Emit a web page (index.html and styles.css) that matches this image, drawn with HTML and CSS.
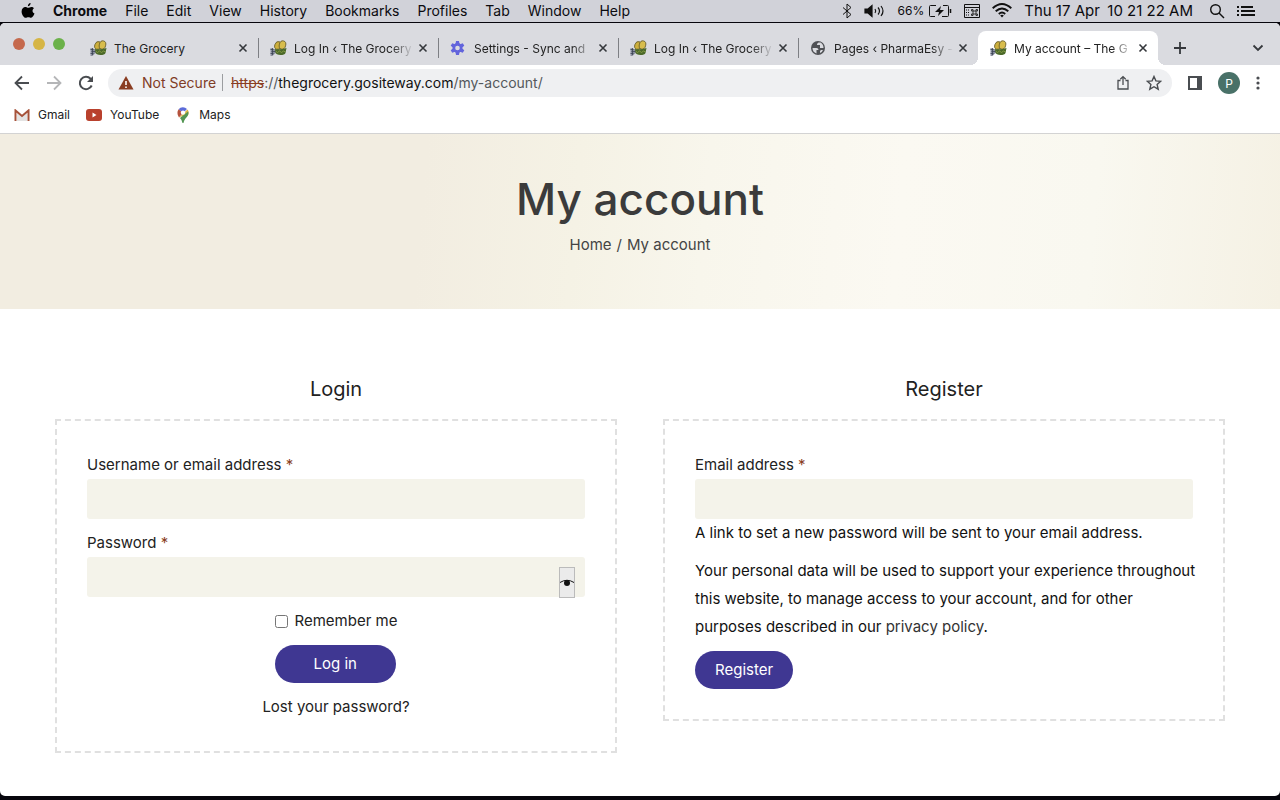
FILE: index.html
```
<!doctype html>
<html lang="en">
  <head>
    <meta charset="UTF-8" />
    <meta name="viewport" content="width=device-width, initial-scale=1" />
    <title>My account – The Grocery</title>
    <link rel="stylesheet" href="styles.css">
  </head>
  <body>
    <!-- shared icons -->
    <svg class="sprite" aria-hidden="true">
      <symbol id="grocery" viewBox="0 0 16 16">
        <ellipse cx="7.500" cy="5.500" rx="3.200" ry="4" fill="#cdb03e" stroke="#665b28" stroke-width=".8" transform="rotate(20 7.500 5.500)" />
        <ellipse cx="12" cy="5" rx="3.200" ry="4.200" fill="#d8bd4c" stroke="#665b28" stroke-width=".8" transform="rotate(15 12 5)" />
        <path d="M4 9q6 1 12-1l-1 5q-1 2-5 2-4 0-6-3z" fill="#4c6a2a" />
        <path d="M5 11l2 1.500 2-1.500 2 1.500 2-1.500 2 1" stroke="#8fa54a" stroke-width=".8" fill="none" />
        <path d="M0 8l4 1 1 4-3 3H0z" fill="#8a90a0" />
        <path d="M0 9.500h3M1 11.500h4M0 13.500h3M2 8v7" stroke="#3c4454" stroke-width=".8" />
      </symbol>
      <symbol id="close" viewBox="0 0 10 10">
        <path d="M1.500 1.500l7 7M8.500 1.500l-7 7" stroke="#35383c" stroke-width="1.600" />
      </symbol>
    </svg>

    <header class="menubar">
      <nav class="menus">
        <svg class="apple" width="14" height="16" viewBox="0 0 14 16"><path d="M9.600 0c.1 1.700-1.200 3.200-2.700 3.300C6.700 1.700 8.100.2 9.600 0zM13 5.300c-2.100 1.300-1.900 4.300.5 5.300-.7 2-2 4.200-3.400 4.200-1 0-1.500-.6-2.700-.6s-1.800.6-2.700.6C2.700 14.800.6 11.500.6 8.500c0-2.900 1.900-4.500 3.700-4.500 1.200 0 2.200.8 2.900.8s1.900-.9 3.200-.9c1 0 2 .5 2.600 1.400z" /></svg>
        <b>Chrome</b>
        <span>File</span>
        <span>Edit</span>
        <span>View</span>
        <span>History</span>
        <span>Bookmarks</span>
        <span>Profiles</span>
        <span>Tab</span>
        <span>Window</span>
        <span>Help</span>
      </nav>
      <div class="status">
        <svg width="10" height="16" viewBox="0 0 10 16" fill="none" stroke="#111"><path d="M1 4.500l8 7-4 3.500V1l4 3.500-8 7" /></svg>
        <svg width="22" height="14" viewBox="0 0 22 14" fill="none" stroke="#111" stroke-width="1.200"><path d="M1 5h3l4-3.500v11L4 9H1z" fill="#111" /><path d="M11 5q1.500 2 0 4M14 3.500q3 3.500 0 7M17 2q4 5 0 10" /></svg>
        <span class="battery">66%
          <svg width="24" height="14" viewBox="0 0 24 14" fill="none" stroke="#111"><path d="M8 1.500H2.500q-1 0-1 1v9q0 1 1 1H7M15 1.500h4.500q1 0 1 1v9q0 1-1 1H14" /><path d="M13 2L7 8h4l-1 4 6-6h-4z" fill="#111" stroke="none" /><path d="M22.500 5v4" stroke-width="1.500" /></svg>
        </span>
        <svg width="16" height="14" viewBox="0 0 16 14" fill="none" stroke="#111"><path d="M.5.500h15v13H.5z" /><path d="M1 3.500h14" /><path d="M2 2h12" stroke="#d1d2d9" stroke-dasharray="1 1" /><path d="M2 6h4M2 8.500h4M2 11h4" stroke-dasharray="1 1" /><path d="M9 7V5.500H7.500V7h6V5.500H12v6h1.500V10h-6v1.500H9z" stroke-width=".8" /></svg>
        <svg width="20" height="15" viewBox="0 0 20 15" fill="none" stroke="#111" stroke-width="1.900"><path d="M.7 5.300q9.300-8.500 18.600 0M3.700 8.300q6.300-5.600 12.600 0M6.800 11q3.200-2.800 6.400 0" /><path d="M8.200 12.500q1.800-1.500 3.600 0L10 14.500z" fill="#111" stroke="none" /></svg>
        <time class="clock">Thu 17 Apr&ensp;10 21 22 AM</time>
        <svg width="16" height="16" viewBox="0 0 16 16" fill="none" stroke="#111" stroke-width="1.400"><circle cx="6.500" cy="6.500" r="4.800" /><path d="M10 10l5 5" /></svg>
        <svg width="19" height="12" viewBox="0 0 19 12" stroke="#111" stroke-width="2"><path d="M0 2h2M4 2h12M0 6h2M4 6h14M0 10h2M4 10h14" /></svg>
      </div>
    </header>

    <div class="window">
      <div class="tabstrip">
        <div class="lights"><i class="red"></i><i class="yellow"></i><i class="green"></i></div>
        <div class="tab">
          <svg width="17" height="16"><use href="#grocery" /></svg>
          <span class="tab-title">The Grocery</span>
          <button class="icon-btn" aria-label="Close tab"><svg width="10" height="10"><use href="#close" /></svg></button>
        </div>
        <div class="tab">
          <svg width="17" height="16"><use href="#grocery" /></svg>
          <span class="tab-title fade">Log In ‹ The Grocery</span>
          <button class="icon-btn" aria-label="Close tab"><svg width="10" height="10"><use href="#close" /></svg></button>
        </div>
        <div class="tab">
          <svg width="17" height="16" viewBox="0 0 17 16"><g fill="#6264dc"><circle cx="7.500" cy="8" r="5" /><path d="M6 1h3l.5 3h-4zM6 15h3l.5-3h-4zM.7 5.800l1.500-2.600L5 4.300 3.200 7.700zM14.300 5.800l-1.500-2.600L10 4.300l1.800 3.400zM.7 10.200l1.500 2.600L5 11.700 3.200 8.300zM14.300 10.200l-1.500 2.600-2.800-1.100 1.800-3.400z" /></g><circle cx="7.500" cy="8" r="2.300" fill="#dadbe0" /></svg>
          <span class="tab-title fade">Settings - Sync and</span>
          <button class="icon-btn" aria-label="Close tab"><svg width="10" height="10"><use href="#close" /></svg></button>
        </div>
        <div class="tab">
          <svg width="17" height="16"><use href="#grocery" /></svg>
          <span class="tab-title fade">Log In ‹ The Grocery</span>
          <button class="icon-btn" aria-label="Close tab"><svg width="10" height="10"><use href="#close" /></svg></button>
        </div>
        <div class="tab">
          <svg width="17" height="16" viewBox="0 0 17 16"><circle cx="8" cy="8" r="7" fill="#505256" /><path d="M2.500 8h4q2 0 2 2h-2v3.500Q2.500 12 2.500 8zM8.500 2.500q-2 1-1.500 2.500h3v3h3.500q0-4-3-5.500zM11 10h2q-1 2.500-3 3v-2z" fill="#dadbe0" /></svg>
          <span class="tab-title fade">Pages ‹ PharmaEsy -</span>
          <button class="icon-btn" aria-label="Close tab"><svg width="10" height="10"><use href="#close" /></svg></button>
        </div>
        <div class="tab active">
          <svg width="17" height="16"><use href="#grocery" /></svg>
          <span class="tab-title fade">My account – The G</span>
          <button class="icon-btn" aria-label="Close tab"><svg width="10" height="10"><use href="#close" /></svg></button>
        </div>
        <button class="icon-btn new-tab" aria-label="New tab"><svg width="12" height="12" viewBox="0 0 12 12" stroke="#35383c" stroke-width="1.800"><path d="M6 0v12M0 6h12" /></svg></button>
        <button class="icon-btn tab-search" aria-label="Search tabs"><svg width="12" height="8" viewBox="0 0 12 8" fill="none" stroke="#35383c" stroke-width="1.800"><path d="M1.500 1.500L6 6l4.500-4.500" /></svg></button>
      </div>

      <div class="toolbar">
        <button class="icon-btn" aria-label="Back"><svg width="16" height="16" viewBox="0 0 16 16" fill="none" stroke="#4a4d51" stroke-width="1.800"><path d="M15 8H2M8 1.500L1.500 8 8 14.500" /></svg></button>
        <button class="icon-btn" aria-label="Forward"><svg width="16" height="16" viewBox="0 0 16 16" fill="none" stroke="#b5b6b8" stroke-width="1.800"><path d="M1 8h13M8 1.500L14.500 8 8 14.500" /></svg></button>
        <button class="icon-btn" aria-label="Reload"><svg width="16" height="16" viewBox="0 0 16 16" fill="none" stroke="#4a4d51" stroke-width="2"><path d="M13.700 10.500A6.200 6.200 0 1 1 12.600 3.800L14 5.500" /><path d="M15 1v6H9z" fill="#4a4d51" stroke="none" /></svg></button>
        <div class="omnibox">
          <svg width="16" height="14" viewBox="0 0 16 14"><path d="M8 0l7.500 13.500H.5z" fill="#8a3d22" /><path d="M8 5v4M8 10.500v1.500" stroke="#fff" stroke-width="1.600" /></svg>
          <span class="insecure">Not Secure</span>
          <span class="url"><s>https</s>://<em>thegrocery.gositeway.com</em>/my-account/</span>
          <button class="icon-btn" aria-label="Share"><svg width="14" height="16" viewBox="0 0 14 16" fill="none" stroke="#4a4d51" stroke-width="1.300"><path d="M4.500 5.500H2v8.500h10V5.500H9.500M7 10V2M4.300 4.300L7 1.600l2.700 2.700" /></svg></button>
          <button class="icon-btn" aria-label="Bookmark this page"><svg width="16" height="16" viewBox="0 0 16 16" fill="none" stroke="#4a4d51" stroke-width="1.400"><path d="M8 1.500l1.900 4.400 4.800.4-3.600 3.200 1.100 4.700L8 11.700l-4.200 2.500 1.100-4.700-3.600-3.200 4.800-.4z" /></svg></button>
        </div>
        <button class="icon-btn" aria-label="Side panel"><svg width="14" height="14" viewBox="0 0 14 14"><path d="M1 1h12v12H1z" fill="none" stroke="#4a4d51" stroke-width="2" /><path d="M9 1h4v12H9z" fill="#4a4d51" /></svg></button>
        <button class="avatar" aria-label="Profile">P</button>
        <button class="icon-btn" aria-label="Menu"><svg width="4" height="14" viewBox="0 0 4 14" fill="#4a4d51"><circle cx="2" cy="2" r="1.600" /><circle cx="2" cy="7" r="1.600" /><circle cx="2" cy="12" r="1.600" /></svg></button>
      </div>

      <nav class="bookmarks">
        <a href="#"><svg width="16" height="12" viewBox="0 0 16 12"><path d="M3 3l5 4 5-4v9H3z" fill="#e3e3e3" /><path d="M1.500 12V1.500L8 7l6.500-5.500V12" fill="none" stroke="#a6523a" stroke-width="2" /></svg>Gmail</a>
        <a href="#"><svg width="16" height="12" viewBox="0 0 16 12"><rect width="16" height="12" rx="3" fill="#b9412d" /><path d="M6.500 3.500v5L10.500 6z" fill="#fff" /></svg>YouTube</a>
        <a href="#"><svg width="16" height="16" viewBox="0 0 16 16"><path d="M3.600 2.200A5.500 5.500 0 0 1 12 2L8 6z" fill="#5b6bd9" /><path d="M3.600 2.200L8 6l-4 4.500Q1 6 3.600 2.200z" fill="#b5513c" /><path d="M4 10.500L12.500 2.500Q14.500 5 13 8.500L8 9z" fill="#d6b545" /><path d="M13.200 4.500Q14.300 8 10.500 11.500 9 13.500 8.500 16h-1Q7 13 5 11z" fill="#539653" /><circle cx="8" cy="5.600" r="2.200" fill="#fff" /></svg>Maps</a>
      </nav>

      <main class="page">
        <section class="hero">
          <h1>My account</h1>
          <p class="crumbs"><a href="#">Home</a><span>/</span><span>My account</span></p>
        </section>

        <div class="columns">
          <section class="column">
            <h2>Login</h2>
            <form class="card login">
              <label for="username">Username or email address <span class="required">*</span></label>
              <input class="field" type="text" id="username">
              <label for="password">Password <span class="required">*</span></label>
              <div class="password">
                <input class="field" type="password" id="password">
                <button class="reveal" type="button" aria-label="Show password"><svg width="14" height="8" viewBox="0 0 14 8"><path d="M0 3.500Q7-1 14 3.500" fill="none" stroke="#111" /><circle cx="7" cy="4" r="3" fill="#111" /></svg></button>
              </div>
              <div class="actions">
                <label class="remember"><input type="checkbox"> Remember me</label>
                <button class="btn wide" type="button">Log in</button>
              </div>
              <a class="lost" href="#">Lost your password?</a>
            </form>
          </section>

          <section class="column">
            <h2>Register</h2>
            <form class="card">
              <label for="email">Email address <span class="required">*</span></label>
              <input class="field" type="email" id="email">
              <p>A link to set a new password will be sent to your email address.</p>
              <p>Your personal data will be used to support your experience throughout this website, to manage access to your account, and for other purposes described in our <a href="#">privacy policy</a>.</p>
              <button class="btn" type="button">Register</button>
            </form>
          </section>
        </div>
      </main>
    </div>
  </body>
</html>
```

FILE: styles.css
```
* {
  box-sizing: border-box;
}
body {
  margin: 0;
  min-height: 100vh;
  display: flex;
  flex-direction: column;
  background: #07060d;
  padding-bottom: 4px;
  font-family: Inter, "Liberation Sans", sans-serif;
  font-size: 14px;
  color: #222;
}
a {
  color: inherit;
  text-decoration: none;
}
button {
  font: inherit;
  border: 0;
  padding: 0;
}
svg {
  flex: none;
}
.sprite {
  position: absolute;
  width: 0;
  height: 0;
}

/* mac menu bar */
.menubar {
  display: flex;
  justify-content: space-between;
  height: 22px;
  margin-bottom: 1px;
  padding: 0 24px 1px 21px;
  background: #d1d2d9;
  color: #0b0b0f;
  white-space: nowrap;
}
.menus,
.status,
.battery {
  display: flex;
  align-items: center;
}
.menus {
  gap: 18px;
}
.status {
  gap: 12px;
}
.battery {
  gap: 4px;
  font-size: 12px;
}
.clock {
  margin-right: 4px;
  font-size: 15px;
}

/* browser window */
.window {
  flex: 1;
  display: flex;
  flex-direction: column;
  overflow: hidden;
  border-radius: 5px;
  background: #fff;
}
.icon-btn {
  display: flex;
  align-items: center;
  justify-content: center;
  background: none;
}
.tabstrip {
  display: flex;
  align-items: flex-end;
  height: 42px;
  background: #dadbe0;
  font-size: 12px;
}
.lights {
  display: flex;
  gap: 8px;
  width: 78px;
  padding: 0 0 15px 13px;
}
.lights i {
  width: 12px;
  height: 12px;
  border-radius: 50%;
}
.lights .red {
  background: #c5694d;
}
.lights .yellow {
  background: #d6b545;
}
.lights .green {
  background: #6bb14a;
}
.tab {
  position: relative;
  display: flex;
  align-items: center;
  flex: 0 1 180px;
  min-width: 0;
  height: 34px;
  padding: 0 10px 0 12px;
  border-radius: 8px 8px 0 0;
}
.tab + .tab:not(.active)::before {
  content: "";
  position: absolute;
  left: 0;
  top: 7px;
  height: 20px;
  border-left: 1px solid #7d7f84;
}
.tab.active {
  background: #fff;
}
.tab.active::before,
.tab.active::after {
  content: "";
  position: absolute;
  bottom: 0;
  width: 8px;
  height: 8px;
}
.tab.active::before {
  right: 100%;
  background: radial-gradient(circle at 0 0, transparent 8px, #fff 8px);
}
.tab.active::after {
  left: 100%;
  background: radial-gradient(circle at 100% 0, transparent 8px, #fff 8px);
}
.tab-title {
  flex: 1;
  margin: 0 2px 0 7px;
  overflow: hidden;
  white-space: nowrap;
}
.fade {
  mask-image: linear-gradient(to right, #000 80%, transparent 98%);
}
.new-tab {
  width: 44px;
  height: 34px;
}
.tab-search {
  width: 44px;
  height: 34px;
  margin-left: auto;
}
.toolbar {
  display: flex;
  align-items: center;
  gap: 16px;
  height: 36px;
  padding: 0 20px 0 14px;
}
.omnibox {
  flex: 1;
  display: flex;
  align-items: center;
  gap: 8px;
  height: 28px;
  margin-left: -2px;
  padding: 0 10px 1px;
  border-radius: 14px;
  background: #eff0f2;
}
.insecure {
  padding-right: 6px;
  border-right: 1px solid #9b9da0;
  color: #7f3c26;
}
.url {
  flex: 1;
  color: #54585c;
}
.url s {
  color: #8a3d22;
}
.url em {
  font-style: normal;
  color: #111;
}
.omnibox .icon-btn {
  margin-left: 8px;
}
.avatar {
  width: 22px;
  height: 22px;
  border-radius: 50%;
  background: #497168;
  color: #fff;
  font-size: 12px;
}
.bookmarks {
  display: flex;
  gap: 16px;
  height: 33px;
  padding: 0 14px 5px;
  border-bottom: 1px solid #d3d3d3;
  font-size: 12px;
}
.bookmarks a {
  display: flex;
  align-items: center;
  gap: 8px;
}

/* account page */
.page {
  font-size: 15px;
  line-height: 28px;
}
.hero {
  padding: 35px 0 50px;
  background: linear-gradient(95deg, #f2ede1 33%, #f5f2e5 45%, #f8f6ec 55%, #fbf9f2 70%, #f9f8f0 85%, #f5f1e4);
  text-align: center;
  color: #444;
}
h1 {
  margin: 0 0 2px;
  font-size: 44px;
  line-height: 60px;
  font-weight: 500;
  color: #3b3b3b;
}
.crumbs {
  display: flex;
  justify-content: center;
  gap: 5px;
  margin: 0;
}
.columns {
  display: grid;
  grid-template-columns: 1fr 1fr;
  align-items: start;
  gap: 46px;
  max-width: 1170px;
  margin: 0 auto;
  padding: 65px 0 40px;
}
h2 {
  margin: 0 0 15px;
  font-size: 20px;
  line-height: 30px;
  font-weight: 400;
  text-align: center;
}
.card {
  display: flex;
  flex-direction: column;
  align-items: flex-start;
  padding: 30px;
  border: 2px dashed #e0e0e0;
}
.field {
  display: block;
  width: 100%;
  height: 40px;
  padding: 0 12px;
  border: 0;
  border-radius: 3px;
  background: #f4f3ea;
}
.required {
  color: #8a3d22;
}
.card p {
  margin: 0 -8px 10px 0;
  color: #111;
}
.card p a {
  color: #333;
}
.password {
  position: relative;
  width: 100%;
}
.reveal {
  position: absolute;
  right: 10px;
  top: 10px;
  display: flex;
  align-items: center;
  justify-content: center;
  width: 16px;
  height: 31px;
  border: 1px solid #bbb;
  background: #ebebeb;
}
.login .field {
  margin-bottom: 10px;
}
.actions {
  align-self: center;
  margin-bottom: 10px;
}
.remember {
  display: flex;
  align-items: center;
  gap: 7px;
  margin-bottom: 10px;
}
.remember input {
  width: 13px;
  height: 13px;
  margin: 0;
}
.btn {
  height: 38px;
  padding: 0 20px;
  border-radius: 19px;
  background: #3f3792;
  color: #fff;
}
.btn.wide {
  padding: 0 39px;
}
.lost {
  align-self: center;
}
```
